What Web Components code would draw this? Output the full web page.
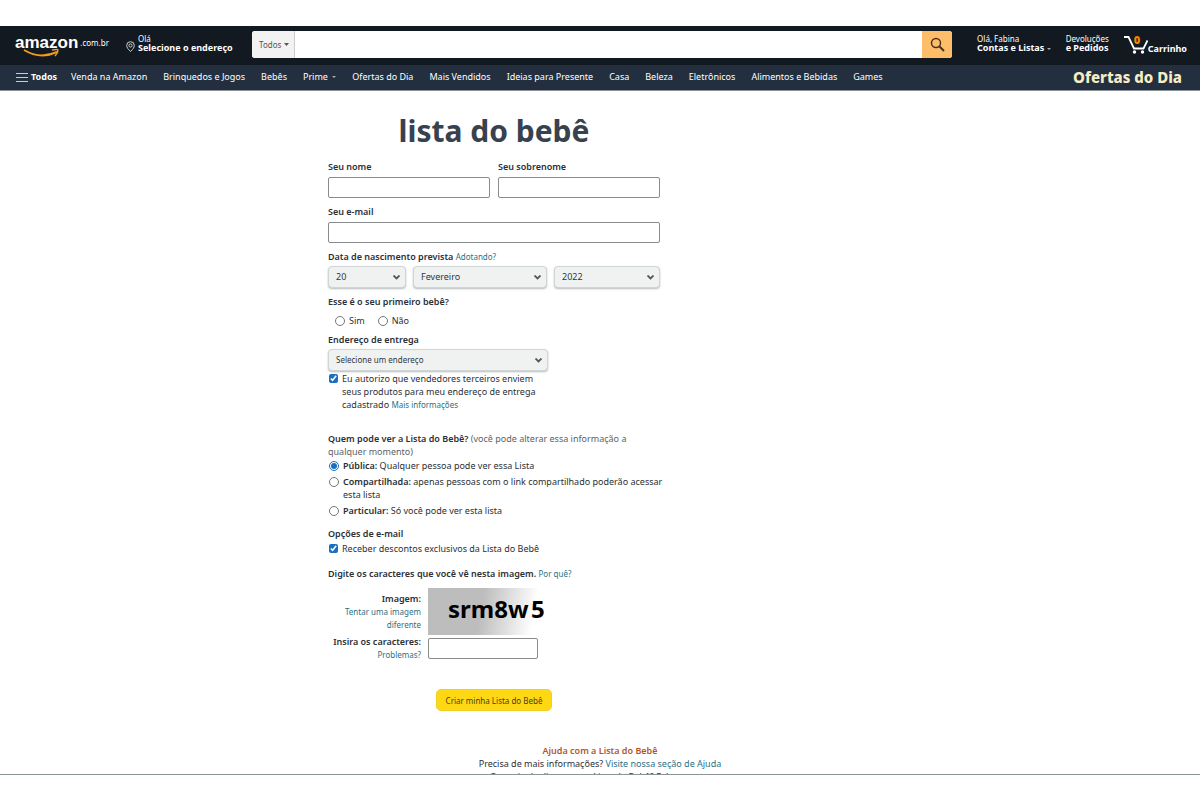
<!DOCTYPE html>
<html lang="pt-BR">
<head>
<meta charset="utf-8">
<title>Lista do bebê</title>
<style>
body { margin: 0; background: #fff; color: #2b3036; font: 9px/13px "Noto Sans", "Open Sans", sans-serif; }
</style>
</head>
<body>
<baby-page></baby-page>
<script>
const define = (name, html, setup) => {
  const tpl = document.createElement('template');
  tpl.innerHTML = html;
  customElements.define(name, class extends HTMLElement {
    constructor() {
      super();
      const root = this.attachShadow({ mode: 'open' });
      root.append(tpl.content.cloneNode(true));
      if (setup) setup(root, this);
    }
  });
};

define('store-logo', `
<style>
:host { display: block; }
a { display: flex; color: #fff; text-decoration: none; position: relative; padding-bottom: 3px; }
b { font: 700 17px/18px "Liberation Sans", sans-serif; }
span { font-size: 8px; line-height: 18px; padding-left: 2px; }
svg { position: absolute; left: 8px; top: 14px; }
</style>
<a href="#"><b>amazon</b><span>.com.br</span>
<svg width="38" height="12" viewBox="0 0 38 12" fill="none" stroke="#f09a20" stroke-width="2"><path d="M1 2c10 6 22 7 33 2"/><path d="M29 2q6-1 6 0q0 3-3 6" stroke-width="1.5"/></svg></a>`);

define('two-line-link', `
<style>
:host { display: block; }
a { display: block; color: #fff; text-decoration: none; font-size: 8px; line-height: 9px; white-space: nowrap; }
b { display: block; font-size: 9px; line-height: 9px; }
</style>
<a href="#"><slot name="top"></slot><b><slot></slot></b></a>`);

define('search-bar', `
<style>
:host { display: flex; flex: 1; height: 27px; border-radius: 3px; overflow: hidden; background: #fff; }
.scope { position: relative; display: flex; align-items: center; background: #f2f2f2; border-right: 1px solid #ccc; width: 42px; }
select { appearance: none; border: 0; background: none; font: 8px/12px "Noto Sans", sans-serif; color: #555; padding: 0 0 0 7px; width: 42px; }
.scope svg { position: absolute; right: 5px; top: 12px; pointer-events: none; }
input { flex: 1; border: 0; padding: 0 8px; min-width: 0; font: inherit; outline: 0; }
button { width: 30px; border: 0; padding: 0; background: #febd69; display: grid; place-items: center; }
</style>
<div class="scope"><select aria-label="Categoria"><option>Todos</option></select>
<svg width="5" height="3"><path d="M0 0h5L2.500 3z" fill="#555"/></svg></div>
<input type="text" aria-label="Pesquisar">
<button aria-label="Buscar"><svg width="15" height="15" viewBox="0 0 15 15" fill="none" stroke="#4a3419" stroke-width="1.500"><circle cx="6" cy="6" r="4.500"/><path d="M9.300 9.300 14 14" stroke-width="2"/></svg></button>`);

define('top-bar', `
<style>
:host { display: flex; align-items: center; height: 39px; background: #131921; color: #fff; padding: 0 13px 2px 15px; box-sizing: border-box; }
store-logo { width: 111px; }
.place { display: flex; align-items: center; gap: 3px; width: 126px; }
.place svg { margin-top: 4px; }
two-line-link { margin-bottom: 3px; }
.contas { margin-left: 25px; }
.pedidos { margin-left: 15px; }
.cart { margin-left: 15px; display: flex; align-items: flex-end; color: #fff; text-decoration: none; font-weight: 700; position: relative; }
.cart b { position: absolute; left: 10px; top: -2px; color: #f08804; font-size: 11px; line-height: 11px; }
.cart span { line-height: 9px; padding-bottom: 1px; }
</style>
<store-logo></store-logo>
<div class="place"><svg width="9" height="11" viewBox="0 0 9 11" fill="none" stroke="#ccc"><path d="M4.500 10.500C2 8 .7 6.500 .7 4.500a3.800 3.800 0 0 1 7.600 0c0 2-1.300 3.500-3.800 6z"/><circle cx="4.500" cy="4.500" r="1.600"/></svg>
<two-line-link><span slot="top">Olá</span>Selecione o endereço</two-line-link></div>
<search-bar></search-bar>
<two-line-link class="contas"><span slot="top">Olá, Fabina</span>Contas e Listas <svg width="4" height="3"><path d="M0 0h4L2 2z" fill="#a7acb2"/></svg></two-line-link>
<two-line-link class="pedidos"><span slot="top">Devoluções</span>e Pedidos</two-line-link>
<a class="cart" href="#"><svg width="24" height="18" viewBox="0 0 24 18" fill="none" stroke="#fff" stroke-width="1.800"><path d="M0 1h4.500l5.500 11.500h9.500l4-8"/><circle cx="10.500" cy="16" r=".8"/><circle cx="18.500" cy="16" r=".8"/></svg><b>0</b><span>Carrinho</span></a>`);

define('nav-bar', `
<style>
:host { display: flex; align-items: center; gap: 16px; height: 26px; box-sizing: border-box; padding: 0 18px 2px 16px; background: #232f3e; border-bottom: 1px solid #8a9097; }
a { color: #fff; text-decoration: none; white-space: nowrap; }
.all { font-weight: 700; display: flex; align-items: center; gap: 3px; margin-right: -2px; }
.deal { margin-left: auto; font-size: 15px; line-height: 22px; font-weight: 800; color: #f6edc6; }
.arrow { margin-left: 2px; }
</style>
<a class="all" href="#"><svg width="12" height="10" stroke="#c9cdd2" stroke-width="1"><path d="M0 1.500h12M0 5.500h12M0 9.500h12"/></svg>Todos</a>
<a href="#">Venda na Amazon</a><a href="#">Brinquedos e Jogos</a><a href="#">Bebês</a><a href="#">Prime <svg class="arrow" width="4" height="4"><path d="M0 0h4L2 2z" fill="#a7acb2"/></svg></a><a href="#">Ofertas do Dia</a><a href="#">Mais Vendidos</a><a href="#">Ideias para Presente</a><a href="#">Casa</a><a href="#">Beleza</a><a href="#">Eletrônicos</a><a href="#">Alimentos e Bebidas</a><a href="#">Games</a>
<a class="deal" href="#">Ofertas do Dia</a>`);

define('text-field', `
<style>
:host { display: block; }
label { display: block; font-weight: 600; line-height: 13px; margin-bottom: 4px; }
input { display: block; box-sizing: border-box; width: 100%; height: 21px; border: 1px solid #888c8c; border-radius: 2px; padding: 0 6px; font: inherit; }
</style>
<label for="f"><slot></slot></label><input id="f" type="text">`);

define('drop-down', `
<style>
:host { display: block; position: relative; }
select { appearance: none; display: block; box-sizing: border-box; width: 100%; height: 22px; border: 1px solid #d0d5d5; border-radius: 4px; background: #f0f2f2; box-shadow: 0 1px 2px #b8bcbc; padding: 0 20px 2px 7px; font: inherit; color: #30363a; }
:host(.address) select { font-size: 8px; }
svg { position: absolute; right: 6px; top: 9px; pointer-events: none; }
</style>
<select><option></option></select><svg width="7" height="5" fill="none" stroke="#50575c" stroke-width="1.800"><path d="M.5 .5l3 3 3-3"/></svg>`,
(root, host) => {
  const select = root.querySelector('select');
  select.setAttribute('aria-label', host.getAttribute('label'));
  root.querySelector('option').textContent = host.getAttribute('value');
});

define('choice-input', `
<style>
:host { display: flex; align-items: flex-start; gap: 4px; }
input { flex: none; margin: 2px 0 0 1px; width: 10px; height: 10px; accent-color: #1a6fc0; }
input[type=checkbox] { width: 9px; height: 9px; }
label { display: block; }
</style>
<input id="c"><label for="c"><slot></slot></label>`,
(root, host) => {
  const input = root.querySelector('input');
  input.type = host.getAttribute('type');
  input.checked = host.hasAttribute('checked');
});

define('captcha-block', `
<style>
:host { display: grid; grid-template-columns: 93px 118px; column-gap: 7px; row-gap: 3px; }
.side { text-align: right; }
.side b, .side label { display: block; font-weight: 600; }
.first { padding-top: 4px; }
.second { margin-top: -2px; }
.second label { line-height: 12px; }
a { display: block; color: #2b7184; text-decoration: none; font-size: 8px; }
.pic { height: 47px; background: linear-gradient(100deg, #bdbdbd 45%, #fff 88%); }
text { font: 700 24px "Noto Sans", sans-serif; fill: #000; }
svg { display: block; }
input { box-sizing: border-box; width: 110px; height: 21px; border: 1px solid #888c8c; border-radius: 2px; font: inherit; display: block; }
</style>
<div class="side first"><b>Imagem:</b><a href="#">Tentar uma imagem diferente</a></div>
<div class="pic"><svg width="118" height="47"><text x="20" y="30">srm8w</text><text x="103" y="30">5</text></svg></div>
<div class="side second"><label for="cap">Insira os caracteres:</label><a href="#">Problemas?</a></div>
<input id="cap" type="text">`);

define('baby-form', `
<style>
:host { display: block; width: 332px; }
a { color: #2b7184; text-decoration: none; font-size: 8px; font-weight: 400; }
h1 { margin: 0 0 10px; font-size: 30px; line-height: 38px; text-align: center; color: #37424f; }
h2 { margin: 0; font-size: 9px; line-height: 13px; font-weight: 600; }
b { font-weight: 600; }
.row { display: flex; gap: 8px; }
.row text-field { flex: 1; }
.gap { margin-top: 7px; }
.dates { margin: 3px 0 7px; display: grid; grid-template-columns: 78px 134px 106px; gap: 7px; }
.radios { display: flex; gap: 12px; margin: 6px 0 6px 6px; }
.address { width: 220px; margin: 3px 0 1px; }
.terms { width: 212px; margin-bottom: 21px; }
.hint { color: #5d6367; font-weight: 400; }
.list { display: grid; row-gap: 3px; margin: 1px -8px 0 0; }
.section { margin-top: 10px; }
.mail { margin: 2px 0 12px; }
captcha-block { margin-top: 8px; }
button { display: block; margin: 28px auto 0; height: 22px; padding: 0 9px; border: 1px solid #f3cf2a; border-radius: 5px; background: #ffd814; color: #463f16; font: inherit; font-size: 8px; }
</style>
<h1>lista do bebê</h1>
<div class="row"><text-field>Seu nome</text-field><text-field>Seu sobrenome</text-field></div>
<text-field class="gap">Seu e-mail</text-field>
<h2 class="gap">Data de nascimento prevista <a href="#">Adotando?</a></h2>
<div class="dates"><drop-down label="Dia" value="20"></drop-down><drop-down label="Mês" value="Fevereiro"></drop-down><drop-down label="Ano" value="2022"></drop-down></div>
<h2>Esse é o seu primeiro bebê?</h2>
<div class="radios"><choice-input type="radio">Sim</choice-input><choice-input type="radio">Não</choice-input></div>
<h2>Endereço de entrega</h2>
<drop-down class="address" label="Endereço de entrega" value="Selecione um endereço"></drop-down>
<choice-input class="terms" type="checkbox" checked>Eu autorizo que vendedores terceiros enviem seus produtos para meu endereço de entrega cadastrado <a href="#">Mais informações</a></choice-input>
<h2>Quem pode ver a Lista do Bebê? <span class="hint">(você pode alterar essa informação a qualquer momento)</span></h2>
<div class="list"><choice-input type="radio" checked><b>Pública:</b> Qualquer pessoa pode ver essa Lista</choice-input><choice-input type="radio"><b>Compartilhada:</b> apenas pessoas com o link compartilhado poderão acessar esta lista</choice-input><choice-input type="radio"><b>Particular:</b> Só você pode ver esta lista</choice-input></div>
<h2 class="section">Opções de e-mail</h2>
<choice-input class="mail" type="checkbox" checked>Receber descontos exclusivos da Lista do Bebê</choice-input>
<h2>Digite os caracteres que você vê nesta imagem. <a href="#">Por quê?</a></h2>
<captcha-block></captcha-block>
<button>Criar minha Lista do Bebê</button>`);

define('help-block', `
<style>
:host { display: block; text-align: center; margin-top: 33px; }
h2 { margin: 0; font-size: 9px; line-height: 13px; color: #b5561f; font-weight: 600; }
p { margin: 0; }
a { color: #2b7184; text-decoration: none; }
</style>
<h2>Ajuda com a Lista do Bebê</h2>
<p>Precisa de mais informações? <a href="#">Visite nossa seção de Ajuda</a></p>
<p>Gostaria de dicas para a Lista do Bebê? Fale conosco</p>`);

define('baby-page', `
<style>
:host { display: flex; flex-direction: column; box-sizing: border-box; height: 100vh; padding: 26px 0 25px; }
main { flex: 1; min-height: 0; overflow: hidden; border-bottom: 1px solid #8d9696; }
.content { max-width: 544px; margin: 0 auto; padding-top: 21px; }
</style>
<top-bar></top-bar><nav-bar></nav-bar>
<main><div class="content"><baby-form></baby-form><help-block></help-block></div></main>`);
</script>
</body>
</html>
